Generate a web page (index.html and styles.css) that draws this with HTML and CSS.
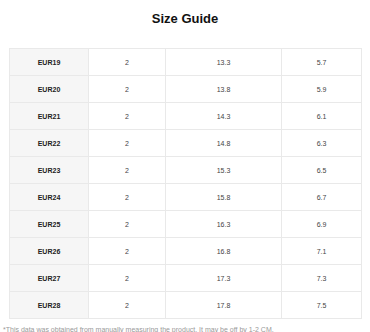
FILE: index.html
```html
<!DOCTYPE html>
<html>
<head>
<meta charset="utf-8">
<link rel="stylesheet" href="styles.css">
</head>
<body>
<div class="page">
  <h1 class="title">Size Guide</h1>
  <table class="sizes">
    <colgroup>
      <col class="c1"><col class="c2"><col class="c3"><col class="c4">
    </colgroup>
    <tbody>
      <tr><th>EUR19</th><td>2</td><td>13.3</td><td>5.7</td></tr>
      <tr><th>EUR20</th><td>2</td><td>13.8</td><td>5.9</td></tr>
      <tr><th>EUR21</th><td>2</td><td>14.3</td><td>6.1</td></tr>
      <tr><th>EUR22</th><td>2</td><td>14.8</td><td>6.3</td></tr>
      <tr><th>EUR23</th><td>2</td><td>15.3</td><td>6.5</td></tr>
      <tr><th>EUR24</th><td>2</td><td>15.8</td><td>6.7</td></tr>
      <tr><th>EUR25</th><td>2</td><td>16.3</td><td>6.9</td></tr>
      <tr><th>EUR26</th><td>2</td><td>16.8</td><td>7.1</td></tr>
      <tr><th>EUR27</th><td>2</td><td>17.3</td><td>7.3</td></tr>
      <tr><th>EUR28</th><td>2</td><td>17.8</td><td>7.5</td></tr>
    </tbody>
  </table>
  <p class="note">*This data was obtained from manually measuring the product. It may be off by 1-2 CM.</p>
</div>
</body>
</html>
```
FILE: styles.css
```css
html, body {
  margin: 0;
  padding: 0;
  background: #fff;
}
.page {
  width: 370px;
  font-family: "Liberation Sans", Arial, sans-serif;
}
.title {
  margin: 0;
  padding-top: 11px;
  height: 48px;
  box-sizing: border-box;
  text-align: center;
  font-size: 13px;
  line-height: 16px;
  font-weight: bold;
  color: #111;
}
.sizes {
  margin-left: 9px;
  border-collapse: collapse;
  table-layout: fixed;
  width: 352px;
}
.c1 { width: 79px; }
.c2 { width: 77px; }
.c3 { width: 116px; }
.c4 { width: 80px; }
.sizes th, .sizes td {
  border: 1px solid #e9e9e9;
  height: 26px;
  padding: 0;
  text-align: center;
  font-size: 7px;
  color: #444;
}
.sizes th {
  background: #f6f6f6;
  font-weight: bold;
  color: #222;
}
.note {
  margin: 7px 0 0 3px;
  font-size: 7px;
  line-height: 8px;
  color: #999;
  white-space: nowrap;
}
```
